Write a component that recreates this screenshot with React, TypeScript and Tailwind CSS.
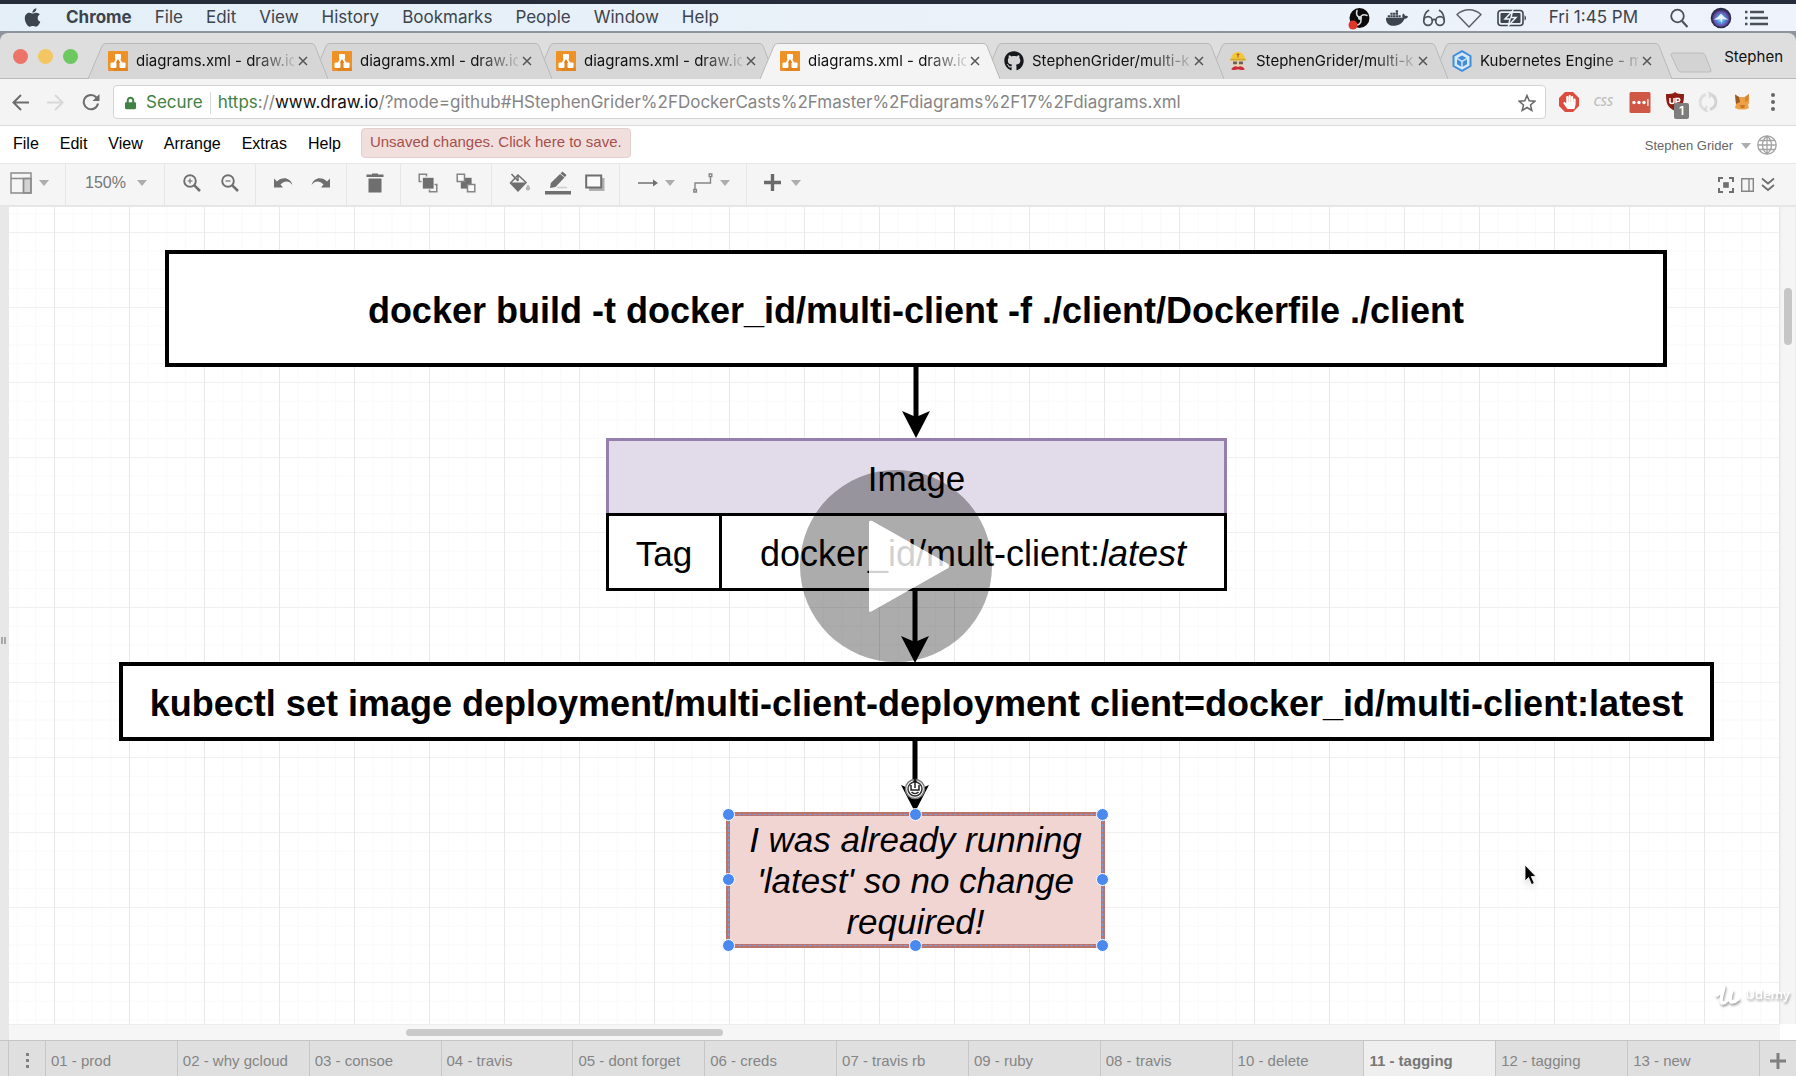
import React from "react";
import { FaApple, FaDocker, FaGithub, FaLock, FaHandPaper } from "react-icons/fa";

const macMenus = ["File", "Edit", "View", "History", "Bookmarks", "People", "Window", "Help"];
const appMenus = ["File", "Edit", "View", "Arrange", "Extras", "Help"];
const pages = [
  "01 - prod", "02 - why gcloud", "03 - consoe", "04 - travis", "05 - dont forget", "06 - creds", "07 - travis rb",
  "09 - ruby", "08 - travis", "10 - delete", "11 - tagging", "12 - tagging", "13 - new",
];

function ObsIcon() {
  return (
    <svg viewBox="0 0 22 24" className="h-6 w-[22px]">
      <circle cx="11.500" cy="12" r="10" fill="#0b0b0b" />
      <g fill="none" stroke="#d9dde2" strokeWidth="1.6" strokeLinecap="round">
        <path d="M9 4.500c-1.500 4 .5 6.500 3.500 7.500" />
        <path d="M19 9.500c-3-1.500-6.500-.5-6.500 2.500" />
        <path d="M12.500 12c1.500 3 0 6-3 7" />
      </g>
      <circle cx="12" cy="12" r="2" fill="#d9dde2" />
      <circle cx="5" cy="19" r="4.500" fill="#e0352b" />
    </svg>
  );
}

function GlassesIcon() {
  return (
    <svg viewBox="0 0 24 18" className="h-[18px] w-6" fill="none" stroke="#4a515b" strokeWidth="1.700" strokeLinecap="round">
      <circle cx="6" cy="12" r="4.300" />
      <circle cx="18" cy="12" r="4.300" />
      <path d="M10.300 11.200c1-1 2.400-1 3.400 0M1.800 11C2 7 3.500 3 6.500 1.500M22.200 11C22 7 20.500 3 17.500 1.500" />
    </svg>
  );
}

function WifiIcon() {
  return (
    <svg viewBox="0 0 26 20" className="h-5 w-[26px]" fill="none" stroke="#5a616b" strokeWidth="1.500" strokeLinejoin="round">
      <path d="M1 6.500C8 .2 18 .2 25 6.500L13 19z" />
    </svg>
  );
}

function BatteryIcon() {
  return (
    <svg viewBox="0 0 30 18" className="h-[18px] w-[30px]">
      <rect x="1" y="1.500" width="25" height="15" rx="3" fill="none" stroke="#3f464f" strokeWidth="1.600" />
      <rect x="3.500" y="4" width="20" height="10" rx="1" fill="#3f464f" />
      <path d="M15.500 2 8 10h5l-1.500 6.500L19 8.500h-5z" fill="#3f464f" stroke="#eef3fa" strokeWidth="1.500" />
      <path d="M27.500 6.500c2 .6 2 4.400 0 5z" fill="#3f464f" />
    </svg>
  );
}

function SiriIcon() {
  return (
    <svg viewBox="0 0 22 24" className="h-6 w-[22px]">
      <defs>
        <radialGradient id="siri" cx="0.500" cy="0.550" r="0.550">
          <stop offset="0" stopColor="#d5f0ff" />
          <stop offset="0.400" stopColor="#4a9be0" />
          <stop offset="0.700" stopColor="#6a4fae" />
          <stop offset="1" stopColor="#23233f" />
        </radialGradient>
      </defs>
      <circle cx="11" cy="12" r="10.300" fill="#2a2d48" />
      <circle cx="11" cy="12" r="9" fill="url(#siri)" />
      <path d="M3.500 13.500C7 12 9 10 11 7.500c2 2.500 4 4.500 7.500 6-3 .3-5 0-6.500-1l-.5 6-1-6c-2 1.200-4 1.300-7 1z" fill="#fff" opacity=".85" />
    </svg>
  );
}

function DrawioIcon() {
  return (
    <svg viewBox="0 0 20 20" preserveAspectRatio="none" className="h-5 w-5 shrink-0">
      <rect width="20" height="20" rx="1" fill="#ef9226" />
      <path d="M9 7 20 18v2H6l-3-3z" fill="#d87a1d" opacity=".6" />
      <path d="M10 6 5.500 14M10 6l4.500 8" stroke="#fff" strokeWidth="1.600" />
      <rect x="7" y="3" width="6" height="5.500" rx="1" fill="#fff" />
      <rect x="2.500" y="11.500" width="6" height="5.500" rx="1" fill="#fff" />
      <rect x="11.500" y="11.500" width="6" height="5.500" rx="1" fill="#fff" />
    </svg>
  );
}

function TravisIcon() {
  return (
    <svg viewBox="0 0 20 22" className="h-5 w-5 shrink-0">
      <path d="M4 9h12v7c0 3-12 3-12 0z" fill="#ecd5b4" />
      <path d="M2.500 9C2.500 4 6 1 10 1s7.500 3 7.500 8z" fill="#efc93a" />
      <path d="M1.500 8.500h17v2h-17z" fill="#d7a92b" />
      <path d="M8.500 3h3v1.200h-1v3h-1v-3h-1z" fill="#c0392b" />
      <path d="M4.500 11.500h4.500v3H4.500zM11 11.500h4.500v3H11z" fill="#6b6258" />
      <path d="M2.500 20c2-3.500 5.500-4 7.500-2.500 2-1.500 5.500-1 7.500 2.500-2.500 1.500-5.500 1-7.500 0-2 1-5 1.500-7.500 0z" fill="#c92d39" />
    </svg>
  );
}

function GkeIcon() {
  return (
    <svg viewBox="0 0 20 22" className="h-[22px] w-5 shrink-0">
      <path d="M10 1.200 18.500 6v10L10 20.800 1.500 16V6z" fill="#d9e8f7" stroke="#3f8edb" strokeWidth="2" strokeLinejoin="round" />
      <path d="M10 5.500 14.500 8 10 10.500 5.500 8zM5 9.300l4.300 2.500v5L5 14.200zM15 9.300l-4.300 2.500v5l4.300-2.600z" fill="#3f8edb" />
    </svg>
  );
}

const tabIcons: Record<string, React.ReactNode> = {
  drawio: <DrawioIcon />,
  github: <FaGithub className="h-5 w-5 shrink-0 text-[#16181b]" />,
  travis: <TravisIcon />,
  gke: <GkeIcon />,
};

const browserTabs = [
  { icon: "drawio", title: "diagrams.xml - draw.io", z: "z-[7]" },
  { icon: "drawio", title: "diagrams.xml - draw.io", z: "z-[6]" },
  { icon: "drawio", title: "diagrams.xml - draw.io", z: "z-[5]" },
  { icon: "drawio", title: "diagrams.xml - draw.io", z: "z-[8]", active: true },
  { icon: "github", title: "StephenGrider/multi-k", z: "z-[4]" },
  { icon: "travis", title: "StephenGrider/multi-k", z: "z-[3]" },
  { icon: "gke", title: "Kubernetes Engine - m", z: "z-[2]" },
];

function BrowserTab({ tab }: { tab: (typeof browserTabs)[number] }) {
  return (
    <div role="tab" aria-selected={!!tab.active} className={"relative -mr-4 h-9 max-w-60 min-w-0 flex-1 " + tab.z}>
      <svg viewBox="0 0 240 36" preserveAspectRatio="none" className="absolute inset-0 h-full w-full">
        <path
          d="M0 36 14 3Q15 .5 18 .5H223Q226 .5 227 3L240 36"
          fill={tab.active ? "#f4f4f4" : "#d6d6d6"}
          stroke="#b9b9b9"
        />
        {tab.active && <path d="M1 35.500h238" stroke="#f4f4f4" />}
      </svg>
      <div className="relative flex h-full items-center pr-5 pl-5">
        {tabIcons[tab.icon]}
        <span className="ml-2 min-w-0 flex-1 overflow-hidden [mask-image:linear-gradient(to_right,#000_74%,transparent_104%)] text-[15px] whitespace-nowrap text-[#111]">
          {tab.title}
        </span>
        <button aria-label="Close tab" className="ml-1 text-[#555]">
          <svg viewBox="0 0 10 10" className="h-[10px] w-[10px]" stroke="currentColor" strokeWidth="1.500">
            <path d="M1 1l8 8M9 1 1 9" />
          </svg>
        </button>
      </div>
    </div>
  );
}

function Caret() {
  return (
    <svg viewBox="0 0 10 6" className="h-[6px] w-[10px] shrink-0">
      <path d="M0 0h10L5 6z" fill="#adadad" />
    </svg>
  );
}

function Tool({ label, children }: { label: string; children: React.ReactNode }) {
  return (
    <button aria-label={label} className="flex shrink-0 items-center">
      {children}
    </button>
  );
}

function Toolbar() {
  const group = "flex h-full shrink-0 items-center border-r border-[#e6e6e6]";
  return (
    <div className="flex h-[42px] items-center border-t border-[#e8e8e8] bg-[#f5f5f5] text-[#6f6f6f]">
      <div className={group + " w-[66px] gap-[7px] pb-1 pl-[10px]"}>
        <Tool label="View">
          <svg viewBox="0 0 22 22" className="h-[22px] w-[22px]" fill="none" stroke="#8a8a8a" strokeWidth="1.400">
            <path d="M13.500 6.500h7.500V21h-7.500z" fill="#d2d2d2" />
            <path d="M1 1h20v20H1zM1 6.500h20M13.500 6.500V21" />
          </svg>
        </Tool>
        <Caret />
      </div>
      <div className={group + " w-[99px] pb-1 pl-[19px]"}>
        <button className="flex items-center gap-[11px] text-base text-[#777]">
          150% <Caret />
        </button>
      </div>
      <div className={group + " w-[91px] gap-5 pb-1 pl-[18px]"}>
        <Tool label="Zoom in">
          <svg viewBox="0 0 18 18" className="h-[18px] w-[18px]" fill="none" stroke="currentColor">
            <circle cx="7" cy="7" r="5.800" strokeWidth="1.900" />
            <path d="M4.500 7h5M7 4.500v5" strokeWidth="1.200" />
            <path d="m11.300 11.300 5.700 5.700" strokeWidth="2.600" />
          </svg>
        </Tool>
        <Tool label="Zoom out">
          <svg viewBox="0 0 18 18" className="h-[18px] w-[18px]" fill="none" stroke="currentColor">
            <circle cx="7" cy="7" r="5.800" strokeWidth="1.900" />
            <path d="M4.500 7h5" strokeWidth="1.200" />
            <path d="m11.300 11.300 5.700 5.700" strokeWidth="2.600" />
          </svg>
        </Tool>
      </div>
      <div className={group + " w-[91px] gap-[18px] pb-1 pl-[17px]"}>
        <Tool label="Undo">
          <svg viewBox="0 0 20 12" className="h-3 w-5" fill="currentColor">
            <path d="M1 1.500 4 4.500C9-.5 17 0 19.500 8 16 3.500 11.500 3.500 7.500 7.500L10 10.500H1z" />
          </svg>
        </Tool>
        <Tool label="Redo">
          <svg viewBox="0 0 20 12" className="h-3 w-5" fill="currentColor">
            <path d="M19 1.500 16 4.500C11-.5 3 0 .5 8 4 3.500 8.500 3.500 12.500 7.500L10 10.500h9z" />
          </svg>
        </Tool>
      </div>
      <div className={group + " w-[54px] pb-1 pl-[19px]"}>
        <Tool label="Delete">
          <svg viewBox="0 0 18 20" className="h-5 w-[18px]" fill="currentColor">
            <path d="M6 .5h6V1.500h5.500v2.500H.5V1.500H6zM2.500 5.500h13v14h-13z" />
          </svg>
        </Tool>
      </div>
      <div className={group + " w-[91px] gap-[18px] pb-1 pl-[17px]"}>
        <Tool label="To front">
          <svg viewBox="0 0 20 20" className="h-5 w-5">
            <path d="M3.500 8.500H1.200V1.200h7.300v2.300M16.500 11.500h2.300v7.300h-7.300v-2.300" fill="none" stroke="#858585" strokeWidth="1.500" />
            <path d="M4.800 4.800h10.800v10.800H4.800z" fill="currentColor" />
          </svg>
        </Tool>
        <Tool label="To back">
          <svg viewBox="0 0 20 20" className="h-5 w-5">
            <path d="M4.800 4.800h10.800v10.800H4.800z" fill="currentColor" />
            <path d="M1.200 1.200h7.300v7.300H1.200zM11.500 11.500h7.300v7.300h-7.300z" fill="#f8f8f8" stroke="#858585" strokeWidth="1.500" />
          </svg>
        </Tool>
      </div>
      <div className={group + " w-[128px] gap-[14px] pb-1 pl-[17px]"}>
        <Tool label="Fill color">
          <svg viewBox="0 0 22 20" className="h-5 w-[22px]">
            <path d="M9 2 1.500 10 9 18l8-8.500z" fill="#f5f5f5" stroke="#6f6f6f" strokeWidth="1.500" />
            <path d="M1.500 9.500h15L9 18z" fill="#6f6f6f" />
            <path d="M2.500 1 9 8M9 2v6" stroke="#6f6f6f" strokeWidth="1.500" />
            <path d="M19 11.500c3.500 4.500 2 6 0 6s-3.500-1.500 0-6z" fill="#b4b4b4" />
          </svg>
        </Tool>
        <Tool label="Line color">
          <svg viewBox="0 0 26 24" className="h-6 w-[26px]">
            <path d="m5 17 .8-5L15 3l4.500 3.500L10.500 16z" fill="#6f6f6f" />
            <path d="m15.500 2.500 2-2 4 3.500-1.500 2z" fill="#6f6f6f" />
            <path d="M12 16.500h10" stroke="#cfcfcf" strokeWidth="1.500" />
            <path d="M0 20h26v3.500H0z" fill="#6f6f6f" />
          </svg>
        </Tool>
        <Tool label="Shadow">
          <svg viewBox="0 0 20 18" className="h-[18px] w-5">
            <path d="M4 4h15.500v13H4z" fill="#b0b0b0" />
            <path d="M1.200 1.500h15v12h-15z" fill="#fafafa" stroke="#6f6f6f" strokeWidth="2" />
          </svg>
        </Tool>
      </div>
      <div className={group + " w-[127px] gap-[7px] pb-1 pl-[18px]"}>
        <Tool label="Connection">
          <svg viewBox="0 0 20 8" className="h-2 w-5">
            <path d="M0 4h16" stroke="#6f6f6f" strokeWidth="1.500" />
            <path d="M15 .5 20 4l-5 3.500z" fill="#6f6f6f" />
          </svg>
        </Tool>
        <Caret />
        <span className="w-1" />
        <Tool label="Waypoints">
          <svg viewBox="0 0 20 20" className="h-5 w-5" fill="none" stroke="#858585" strokeWidth="1.400">
            <path d="M2 16v-6h15.500V4" />
            <path d="M.8 16.500h2.600V19H.8zM16.200 1h2.600v2.600h-2.600z" />
          </svg>
        </Tool>
        <Caret />
      </div>
      <div className="flex shrink-0 items-center gap-[10px] pb-1 pl-[17px]">
        <Tool label="Insert">
          <svg viewBox="0 0 17 17" className="h-[17px] w-[17px]">
            <path d="M8.500 0v17M0 8.500h17" stroke="#6a6a6a" strokeWidth="3.400" />
          </svg>
        </Tool>
        <Caret />
      </div>
      <div className="ml-auto flex items-center gap-[7px] pr-[21px]">
        <Tool label="Fullscreen">
          <svg viewBox="0 0 16 16" className="h-4 w-4">
            <path d="M1 5V1h4M11 1h4v4M15 11v4h-4M5 15H1v-4" fill="none" stroke="#6f6f6f" strokeWidth="2" />
            <path d="M5.200 5.200h5.600v5.600H5.200z" fill="#6f6f6f" />
          </svg>
        </Tool>
        <Tool label="Format panel">
          <svg viewBox="0 0 13 14" className="h-[14px] w-[13px]" fill="none" stroke="#858585" strokeWidth="1.400">
            <path d="M.7.700h11.600v12.600H.7zM8 .7v12.600" />
          </svg>
        </Tool>
        <Tool label="Collapse">
          <svg viewBox="0 0 14 15" className="h-[15px] w-[14px]" fill="none" stroke="#6f6f6f" strokeWidth="1.800">
            <path d="m1 1.500 6 5 6-5M1 8l6 5 6-5" />
          </svg>
        </Tool>
      </div>
    </div>
  );
}

function Arrow({ className, length }: { className: string; length: number }) {
  return (
    <svg viewBox={`0 0 28 ${length}`} width="28" height={length} className={"absolute " + className}>
      <path d={`M14 0V${length - 18}`} stroke="#000" strokeWidth="5" />
      <path d={`M14 ${length} 0 ${length - 27}l14 6 14-6z`} fill="#000" />
    </svg>
  );
}

const handles = [
  "-left-2 -top-2", "left-[179px] -top-2", "left-[366px] -top-2",
  "-left-2 top-[57px]", "left-[366px] top-[57px]",
  "-left-2 top-[123px]", "left-[179px] top-[123px]", "left-[366px] top-[123px]",
];

function Canvas() {
  const box = "absolute flex items-center justify-center whitespace-nowrap border-4 border-black bg-white";
  return (
    <div
      className="relative min-w-0 flex-1 overflow-hidden bg-white text-[35px] text-black"
      style={{
        backgroundImage:
          "linear-gradient(to right,#e8e8e8 1px,transparent 1px),linear-gradient(to bottom,#f0f0f0 1px,transparent 1px),linear-gradient(to right,#f9f9f9 1px,transparent 1px),linear-gradient(to bottom,#f9f9f9 1px,transparent 1px)",
        backgroundSize: "75px 75px,75px 75px,18.75px 18.75px,18.75px 18.75px",
        backgroundPosition: "45px 25px",
      }}
    >
      <div className={box + " top-[43px] left-[156px] h-[117px] w-[1502px] pt-1 text-[36px] font-bold"}>
        docker build -t docker_id/multi-client -f ./client/Dockerfile ./client
      </div>
      <Arrow className="top-[158px] left-[893px]" length={73} />

      <div className="absolute top-[231px] left-[597px] flex h-[78px] w-[621px] items-center justify-center border-[3px] border-[#9680ab] bg-[#e2dcea] pt-1">
        Image
      </div>
      <div className="absolute top-[306px] left-[597px] flex h-[78px] w-[621px] border-[3px] border-black bg-white">
        <div className="flex w-[113px] items-center justify-center border-r-[3px] border-black pt-1">Tag</div>
        <div className="flex flex-1 items-center justify-center pt-1 text-[36px] whitespace-nowrap">
          <span>
            docker_id/mult-client:<i>latest</i>
          </span>
        </div>
      </div>
      <Arrow className="top-[383px] left-[892px]" length={73} />

      <div className={box + " top-[455px] left-[110px] h-[79px] w-[1595px] pt-1 text-[36px] font-bold"}>
        kubectl set image deployment/multi-client-deployment client=docker_id/multi-client:latest
      </div>
      <Arrow className="top-[533px] left-[892px]" length={72} />
      <svg viewBox="0 0 22 24" className="absolute top-[570px] left-[895px] h-6 w-[22px]" fill="none">
        <circle cx="11" cy="12" r="9.500" fill="#fff" stroke="#777" strokeWidth="1.500" />
        <circle cx="11" cy="12" r="7" stroke="#333" strokeWidth="1.500" />
        <path d="M11 2v9M7 8v5h8V8M7.500 15c2 2 5 2 7 0" stroke="#222" strokeWidth="1.500" />
        <path d="M11 1 13 5H9z" fill="#111" />
      </svg>

      <div className="absolute top-[605px] left-[717px] h-[136px] w-[379px] border-4 border-[#bb746d] bg-[#f1d5d3] text-center leading-[41px] italic">
        <p className="pt-[3px]">
          I was already running
          <br />
          &apos;latest&apos; so no change
          <br />
          required!
        </p>
        <div className="absolute -inset-[2px] border border-dashed border-[#7f9fd8]" />
        {handles.map((h) => (
          <span key={h} className={"absolute h-[13px] w-[13px] rounded-full border border-white bg-[#4a8af0] " + h} />
        ))}
      </div>

      <svg viewBox="0 0 14 22" className="absolute top-[657px] left-[1515px] h-[22px] w-[14px] drop-shadow-md">
        <path d="M1 1v16l3.500-3.500 3 7 2.800-1.200-3-6.800H12z" fill="#000" stroke="#fff" strokeWidth=".8" />
      </svg>
    </div>
  );
}

function PlayOverlay() {
  return (
    <button aria-label="Play" className="absolute top-[470px] left-1/2 z-20 -ml-[98px]">
      <svg viewBox="0 0 192 192" className="h-48 w-48">
        <path
          fillRule="evenodd"
          d="M96 0a96 96 0 1 0 0 192A96 96 0 1 0 96 0zM72 51q-3-1-3 2v87q0 3 3 1l76-43q2-2 0-4z"
          fill="#000"
          fillOpacity=".325"
        />
        <path d="M72 51q-3-1-3 2v87q0 3 3 1l76-43q2-2 0-4z" fill="#fff" fillOpacity=".82" />
      </svg>
    </button>
  );
}

export default function App() {
  return (
    <div className="relative flex min-h-screen flex-col overflow-hidden bg-white font-['Liberation_Sans',Arial,sans-serif]">
      <div className="h-1 bg-[#272c3b]" />

      <header className="flex h-[27px] items-center bg-gradient-to-r from-[#e4eff8] to-[#eff3fb] pr-7 pl-[23px] font-['Inter',sans-serif] text-[17px] text-[#3c444e]">
        <FaApple className="h-[21px] w-[19px]" />
        <nav className="ml-6 flex items-center gap-[23px] whitespace-nowrap">
          <button className="font-bold">Chrome</button>
          {macMenus.map((m) => (
            <button key={m}>{m}</button>
          ))}
        </nav>
        <div className="ml-auto flex items-center whitespace-nowrap">
          <ObsIcon />
          <FaDocker className="ml-4 h-[22px] w-[22px]" />
          <span className="ml-[14px]"><GlassesIcon /></span>
          <span className="ml-[10px]"><WifiIcon /></span>
          <span className="ml-[15px]"><BatteryIcon /></span>
          <span className="ml-[22px]">Fri 1:45 PM</span>
          <button aria-label="Search" className="ml-8">
            <svg viewBox="0 0 18 20" className="h-5 w-[18px]" fill="none" stroke="#4a515b" strokeWidth="1.800">
              <circle cx="7.500" cy="8" r="6.300" />
              <path d="m12 13 5.500 6" strokeWidth="2.200" />
            </svg>
          </button>
          <span className="ml-[22px]"><SiriIcon /></span>
          <button aria-label="Notifications" className="ml-3">
            <svg viewBox="0 0 24 16" className="h-4 w-6" stroke="#4a515b" strokeWidth="2.300">
              <path d="M6 2h14M6 8h18M6 14h18M1 2h2.500M1 8h2.500M1 14h2.500" />
            </svg>
          </button>
        </div>
      </header>

      <div className="bg-[#8d949b] pt-[2px]">
        <div className="flex h-[46px] items-end rounded-t-lg border-b border-[#b9b9b9] bg-[#dedede] font-['Inter',sans-serif]">
          <div className="flex w-[88px] shrink-0 items-center gap-[10px] self-stretch pt-[2px] pl-[13px]">
            <span className="h-[15px] w-[15px] rounded-full bg-[#ec7468]" />
            <span className="h-[15px] w-[15px] rounded-full bg-[#f4c661]" />
            <span className="h-[15px] w-[15px] rounded-full bg-[#6cc95f]" />
          </div>
          <div role="tablist" className="-mb-px flex min-w-0 flex-1">
            {browserTabs.map((t, i) => (
              <BrowserTab key={i} tab={t} />
            ))}
            <button aria-label="New tab" className="mt-[9px] ml-[14px] h-[21px] w-[42px] shrink-0">
              <svg viewBox="0 0 42 21" className="h-full w-full">
                <path d="M3 1h29q2 0 3 2l6 15q1 2-2 2H11q-2 0-3-2L1 3q-.5-2 2-2z" fill="#d3d3d3" stroke="#bcbcbc" />
              </svg>
            </button>
          </div>
          <button className="self-center pt-1 pr-[13px] text-[15px] text-[#111]">Stephen</button>
        </div>
      </div>

      <div className="flex h-[47px] items-center border-b border-[#dcdcdc] bg-[#f4f4f4] pr-[17px] font-['Inter',sans-serif]">
        <button aria-label="Back" className="ml-3 text-[#6d6d6d]">
          <svg viewBox="0 0 17 17" className="h-[17px] w-[17px]" fill="none" stroke="currentColor" strokeWidth="2">
            <path d="M17 8.500H2M9 1 1.500 8.500 9 16" />
          </svg>
        </button>
        <button aria-label="Forward" className="ml-[18px] text-[#d8d8d8]">
          <svg viewBox="0 0 17 17" className="h-[17px] w-[17px]" fill="none" stroke="currentColor" strokeWidth="2">
            <path d="M0 8.500h15M8 1l7.500 7.500L8 16" />
          </svg>
        </button>
        <button aria-label="Reload" className="ml-[18px] text-[#6d6d6d]">
          <svg viewBox="0 0 18 18" className="h-[18px] w-[18px]" fill="none" stroke="currentColor" strokeWidth="2">
            <path d="M16 10.500A7.200 7.200 0 1 1 14.500 4.500" />
            <path d="M17.500 1v7h-7z" fill="currentColor" stroke="none" />
          </svg>
        </button>
        <div className="ml-[13px] flex h-[34px] min-w-0 flex-1 items-center rounded border border-[#d4d4d4] bg-white pt-px pr-[9px] pl-[11px] text-[17px] whitespace-nowrap">
          <FaLock className="h-[14px] w-[11px] text-[#3f8244]" />
          <span className="ml-[10px] text-[#3f8244]">Secure</span>
          <span className="mx-[7px] h-[22px] w-px bg-[#d8d8d8]" />
          <div
            role="textbox"
            aria-label="Address"
            contentEditable
            suppressContentEditableWarning
            className="min-w-0 flex-1 overflow-hidden text-[#858585] outline-none"
          >
            <span className="text-[#3f8244]">https</span>://<span className="text-[#111]">www.draw.io</span>
            /?mode=github#HStephenGrider%2FDockerCasts%2Fmaster%2Fdiagrams%2F17%2Fdiagrams.xml
          </div>
          <button aria-label="Bookmark">
            <svg viewBox="0 0 18 18" className="h-[18px] w-[18px]" fill="none" stroke="#666" strokeWidth="1.500">
              <path d="m9 1.500 2.200 5.200 5.600.5-4.300 3.700 1.300 5.500L9 13.500l-4.800 2.900 1.300-5.500L1.200 7.200l5.600-.5z" />
            </svg>
          </button>
        </div>
        <button aria-label="AdBlock" className="relative ml-[13px] flex h-5 w-5 items-center justify-center">
          <svg viewBox="0 0 20 20" className="absolute inset-0">
            <path d="M6 0h8l6 6v8l-6 6H6l-6-6V6z" fill="#dc4c3f" />
          </svg>
          <FaHandPaper className="relative h-[14px] w-[13px] text-white" />
        </button>
        <button className="ml-[14px] font-['Open_Sans',sans-serif] text-[12px] font-semibold text-[#bdbdbd] italic">CSS</button>
        <button aria-label="Password manager" className="ml-4">
          <svg viewBox="0 0 22 21" className="h-[21px] w-[22px]">
            <rect x=".5" width="21" height="21" rx="1.500" fill="#cf5746" />
            <g fill="#fff">
              <circle cx="5" cy="10.500" r="1.700" />
              <circle cx="10" cy="10.500" r="1.700" />
              <circle cx="15" cy="10.500" r="1.700" />
              <path d="M18.300 7h1.200v7h-1.200z" />
            </g>
          </svg>
        </button>
        <button aria-label="uBlock" className="relative ml-[14px] h-[22px] w-[22px]">
          <svg viewBox="0 0 22 22" className="h-full w-full">
            <path d="M10 1c2 2 5 2 9 2 0 9-1 13-9 17C2 16 1 12 1 3c4 0 7 0 9-2z" fill="#8e1d14" />
            <path d="M5 7v4q0 1.500 2 1.500T9 11V7M11 13V7.500h3q1.500 1.500 0 3h-3" fill="none" stroke="#fff" strokeWidth="1.500" />
          </svg>
          <span className="absolute top-[12px] left-[9px] flex h-4 w-[15px] items-center justify-center rounded-xs bg-[#7d7d7d] text-[12px] font-semibold text-white">1</span>
        </button>
        <button aria-label="Extension" className="ml-[11px]">
          <svg viewBox="0 0 20 20" className="h-5 w-5" fill="none" strokeWidth="3">
            <path d="M9 18C0 16 0 5 8 2.500" stroke="#dedede" />
            <path d="M11 2c9 2 9 13 1 15.500" stroke="#d3d3d3" />
            <path d="m9 14-3 4 4 2M11 6l3-4-4-2" stroke="#dadada" strokeWidth="1.500" />
          </svg>
        </button>
        <button aria-label="Metamask" className="ml-[16px]">
          <svg viewBox="0 0 16 18" className="h-[18px] w-4">
            <path d="M1 1.500 5 4h6l4-3v9l-1 2 1 3-4 1.500H5L1 15l1-4z" fill="#eea046" />
            <path d="M1 1.500 5 4l1 5-4 2z" fill="#9a5a26" />
            <path d="m11 4 4-3-1 7-3 1z" fill="#d98632" />
            <path d="M6 12h5l-1 3H7z" fill="#c9772c" />
          </svg>
        </button>
        <button aria-label="Menu" className="ml-[17px] flex flex-col items-center gap-[3px] px-1">
          <span className="h-1 w-1 rounded-full bg-[#666]" />
          <span className="h-1 w-1 rounded-full bg-[#666]" />
          <span className="h-1 w-1 rounded-full bg-[#666]" />
        </button>
      </div>

      <div className="flex h-[37px] items-center pr-[19px] pb-[2px] pl-[13px] whitespace-nowrap">
        <nav className="flex items-center gap-[21px] text-base text-black">
          {appMenus.map((m) => (
            <button key={m}>{m}</button>
          ))}
        </nav>
        <button className="mb-[2px] ml-5 h-[30px] rounded border border-[#e3cfce] bg-[#f1dfde] px-2 text-[15px] text-[#a54f4d]">
          Unsaved changes. Click here to save.
        </button>
        <button className="ml-auto flex items-center gap-2 pt-1 text-[13px] text-[#666]">
          Stephen Grider <Caret />
        </button>
        <button aria-label="Language" className="ml-[6px] pt-[2px]">
          <svg viewBox="0 0 20 20" className="h-5 w-5" fill="none" stroke="#a3a3a3" strokeWidth="1.300">
            <circle cx="10" cy="10" r="9.200" />
            <path d="M10 1v18M1 10h18M2.500 5.500h15M2.500 14.500h15M10 1C4 6 4 14 10 19M10 1c6 5 6 13 0 18" />
          </svg>
        </button>
      </div>

      <Toolbar />
      <div className="h-[2px] bg-[#e6e6e6]" />

      <main className="flex min-h-0 flex-1">
        <div className="flex w-[9px] shrink-0 items-center bg-[#e8e8e8] pt-[50px]">
          <div className="ml-[1px] h-[7px] w-[5px] border-x-2 border-[#a8a8a8]" />
        </div>
        <Canvas />
        <div className="flex w-4 shrink-0 justify-center border-r border-l border-[#ececec] bg-[#f5f5f5] pt-[81px]">
          <div className="h-[57px] w-2 rounded-full bg-[#c6c6c6]" />
        </div>
      </main>

      <div className="flex h-4 shrink-0 bg-[#e8e8e8] pl-[9px]">
        <div className="flex flex-1 items-center border-t border-[#ededed] bg-[#f6f6f6] pl-[397px]">
          <div className="h-[7px] w-[317px] rounded-full bg-[#cacaca]" />
        </div>
        <div className="w-4 bg-white" />
      </div>

      <footer className="flex h-9 shrink-0 border-t border-[#c4c4c4] bg-[#dfdfdf] pl-2 text-[15px] text-[#858585]">
        <button aria-label="Pages" className="flex w-[37px] flex-col items-center justify-center gap-[3px] border-l border-[#c6c6c6] pt-1">
          <span className="h-[3px] w-[3px] bg-[#808080]" />
          <span className="h-[3px] w-[3px] bg-[#808080]" />
          <span className="h-[3px] w-[3px] bg-[#808080]" />
        </button>
        {pages.map((p) => (
          <button
            key={p}
            className={
              "min-w-0 flex-1 overflow-hidden border-l border-[#c6c6c6] pt-[5px] pl-[5px] text-left whitespace-nowrap " +
              (p === "11 - tagging" ? "bg-[#efefef] font-bold text-[#777]" : "")
            }
          >
            {p}
          </button>
        ))}
        <button aria-label="Insert page" className="flex w-[37px] items-center justify-center border-l border-[#c6c6c6] pt-1">
          <svg viewBox="0 0 16 16" className="h-4 w-4">
            <path d="M8 0v16M0 8h16" stroke="#808080" strokeWidth="3" />
          </svg>
        </button>
      </footer>

      <PlayOverlay />
      <div className="absolute right-[6px] bottom-[70px] z-10 flex items-center gap-1 font-['Open_Sans',sans-serif] text-[13px] font-semibold text-white drop-shadow-[1px_2px_1px_rgba(0,0,0,0.35)]">
        <svg viewBox="0 0 26 22" className="h-[22px] w-[26px]" fill="none" stroke="#fff" strokeWidth="3.500" strokeLinecap="round">
          <path d="M2 11C6 8 8 5 8 2c1 0 1 1 0 5-2 7-3 12 0 12 4 0 7-7 9-13-2 7-3 12 0 12 2 0 4-1 6-3" />
        </svg>
        Udemy
      </div>
    </div>
  );
}
